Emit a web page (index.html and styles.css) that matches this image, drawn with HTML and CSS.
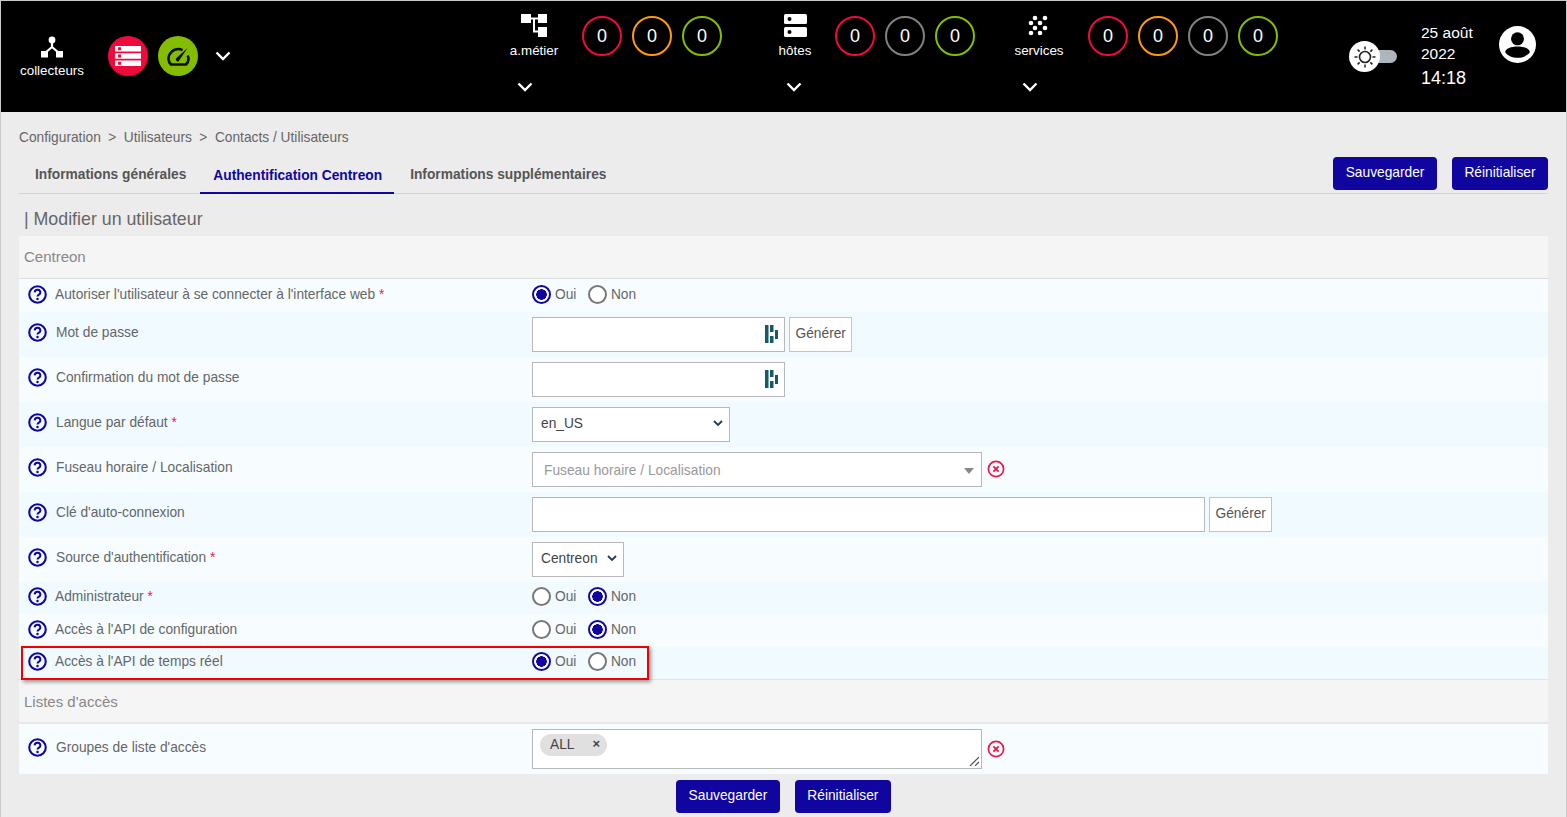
FILE: index.html
```html
<!DOCTYPE html>
<html lang="fr">
<head>
    <meta charset="UTF-8">
    <title>Modifier un utilisateur</title>
    <link rel="stylesheet" href="styles.css">
</head>
<body>
    <svg class="defs" width="0" height="0">
        <symbol id="help" viewBox="0 0 20 20">
            <circle cx="10" cy="10" r="8.7" fill="none" stroke="#10069f" stroke-width="2.2"/>
            <path d="M7 7.7a3 3 0 0 1 6 .4c0 1.9-3 2.1-3 4" fill="none" stroke="#10069f" stroke-width="2.1"/>
            <circle cx="10" cy="14.8" r="1.3" fill="#10069f"/>
        </symbol>
        <symbol id="pass" viewBox="0 0 13 18">
            <path d="M0 0h3.5v18H0zM5 0h3.5v7H5zM5 11h3.5v7H5zM10 5h3v9h-3z" fill="#16596b"/>
        </symbol>
        <symbol id="clear" viewBox="0 0 18 18">
            <circle cx="9" cy="9" r="7.6" fill="none" stroke="#e8174a" stroke-width="1.7"/>
            <path d="M6.4 6.4l5.2 5.2M11.6 6.4l-5.2 5.2" stroke="#e8174a" stroke-width="1.9"/>
        </symbol>
        <symbol id="chev" viewBox="0 0 16 10">
            <path d="M1.5 1.5L8 8l6.5-6.5" fill="none" stroke="#fff" stroke-width="2.4"/>
        </symbol>
    </svg>

    <header class="topbar">
        <div class="poller">
            <svg class="poller-icon" viewBox="0 0 24 22" width="24" height="22">
                <circle cx="12" cy="4" r="3.4" fill="#fff"/>
                <path d="M12 5v7M12 11l-7 6M12 11l7 6" stroke="#fff" stroke-width="2.2" fill="none"/>
                <rect x="1" y="15" width="7" height="6.5" fill="#fff"/>
                <rect x="16" y="15" width="7" height="6.5" fill="#fff"/>
            </svg>
            <span>collecteurs</span>
        </div>
        <div class="round round-red">
            <svg viewBox="0 0 26 20" width="26" height="20">
                <path d="M0 0h26v5.500H0zM0 7.300h26v5.500H0zM0 14.500h26V20H0z" fill="#fff"/>
                <path d="M3 1.300h3v3H3zM3 8.600h3v3H3zM3 15.800h3v3H3z" fill="#f00a3c"/>
            </svg>
        </div>
        <div class="round round-green">
            <svg viewBox="0 0 23 19" width="23" height="19">
                <path d="M15.500 3.200C14.200 2.500 12.900 2 11.500 2 6 2 1.500 6.500 1.500 12c0 2.200.8 4 2.500 5.500h15c1.700-1.500 2.500-3.300 2.500-5.500 0-1.300-.3-2.500-.8-3.500" fill="none" stroke="#0d0d0d" stroke-width="2.600"/>
                <path d="M20.500 1L9 11.500c-.8 1 .5 3.500 2.500 3z" fill="#0d0d0d"/>
            </svg>
        </div>
        <svg class="chev poller-chev"><use href="#chev"/></svg>

        <div class="stat stat-ba">
            <div class="stat-name">
                <svg class="stat-icon" viewBox="0 0 26 23" width="26" height="23">
                    <path d="M0 0h10v9H0zM17 0h9v9h-9zM17 13h9v10h-9z" fill="#fff"/>
                    <path d="M9 4.500h9M13 4.500V17.500h5" stroke="#fff" stroke-width="2" fill="none"/>
                </svg>
                <span>a.métier</span>
                <svg class="chev"><use href="#chev"/></svg>
            </div>
            <div class="stat-count red">0</div>
            <div class="stat-count orange">0</div>
            <div class="stat-count green">0</div>
        </div>

        <div class="stat stat-hosts">
            <div class="stat-name">
                <svg class="stat-icon" viewBox="0 0 23 23" width="23" height="23">
                    <rect width="23" height="10" rx="1.500" fill="#fff"/>
                    <rect y="13" width="23" height="10" rx="1.500" fill="#fff"/>
                    <circle cx="5.500" cy="5" r="2" fill="#000"/>
                    <circle cx="5.500" cy="18" r="2" fill="#000"/>
                </svg>
                <span>hôtes</span>
                <svg class="chev"><use href="#chev"/></svg>
            </div>
            <div class="stat-count red">0</div>
            <div class="stat-count grey">0</div>
            <div class="stat-count green">0</div>
        </div>

        <div class="stat stat-services">
            <div class="stat-name">
                <svg class="stat-icon" viewBox="0 0 22 21" width="22" height="21">
                    <circle cx="7" cy="3" r="2.300" fill="#fff"/>
                    <circle cx="17" cy="3" r="2.300" fill="#fff"/>
                    <circle cx="3" cy="8" r="2.300" fill="#fff"/>
                    <circle cx="12" cy="8" r="2.300" fill="#fff"/>
                    <circle cx="7" cy="13" r="2.300" fill="#fff"/>
                    <circle cx="17" cy="13" r="2.300" fill="#fff"/>
                    <circle cx="3" cy="18" r="2.300" fill="#fff"/>
                    <circle cx="12" cy="18" r="2.300" fill="#fff"/>
                </svg>
                <span>services</span>
                <svg class="chev"><use href="#chev"/></svg>
            </div>
            <div class="stat-count red">0</div>
            <div class="stat-count orange">0</div>
            <div class="stat-count grey">0</div>
            <div class="stat-count green">0</div>
        </div>

        <div class="theme-switch">
            <div class="theme-knob">
                <svg viewBox="0 0 24 24" width="24" height="24">
                    <circle cx="12" cy="12" r="5.500" fill="none" stroke="#222" stroke-width="1.600"/>
                    <path d="M12 1.500v3M12 19.500v3M1.500 12h3M19.500 12h3M4.600 4.600l2 2M17.400 17.400l2 2M4.600 19.400l2-2M17.400 6.600l2-2" stroke="#222" stroke-width="1.500"/>
                </svg>
            </div>
        </div>

        <div class="clock">
            <div class="clock-date">25 août 2022</div>
            <div class="clock-time">14:18</div>
        </div>

        <svg class="user" viewBox="0 0 36 36" width="37" height="37">
            <circle cx="18" cy="18" r="18" fill="#fff"/>
            <circle cx="18" cy="12.500" r="6.300" fill="#000"/>
            <path d="M6 25.500c0-3.500 6-5.500 12-5.500s12 2 12 5.500C27.500 29 23 31 18 31S8.500 29 6 25.500z" fill="#000"/>
        </svg>
    </header>

    <main class="content">
        <nav class="crumbs">
            <span>Configuration</span><span class="sep">&gt;</span><span>Utilisateurs</span><span class="sep">&gt;</span><span>Contacts / Utilisateurs</span>
        </nav>

        <div class="tabbar">
            <a class="tab tab-first">Informations générales</a>
            <a class="tab tab-active">Authentification Centreon</a>
            <a class="tab tab-last">Informations supplémentaires</a>
            <div class="tab-actions">
                <button class="btn">Sauvegarder</button>
                <button class="btn">Réinitialiser</button>
            </div>
        </div>

        <h1 class="page-title">| Modifier un utilisateur</h1>

        <form class="form">
            <div class="section">Centreon</div>

            <div class="row row-short odd">
                <div class="lbl lbl-radio"><svg class="help"><use href="#help"/></svg><span>Autoriser l'utilisateur à se connecter à l'interface web <i>*</i></span></div>
                <div class="val radios">
                    <label><input type="radio" name="login" checked>Oui</label>
                    <label><input type="radio" name="login">Non</label>
                </div>
            </div>

            <div class="row even">
                <div class="lbl"><svg class="help"><use href="#help"/></svg><span>Mot de passe</span></div>
                <div class="val">
                    <div class="field field-pass"><svg class="pass-icon"><use href="#pass"/></svg></div>
                    <button type="button" class="gen">Générer</button>
                </div>
            </div>

            <div class="row odd">
                <div class="lbl"><svg class="help"><use href="#help"/></svg><span>Confirmation du mot de passe</span></div>
                <div class="val">
                    <div class="field field-pass"><svg class="pass-icon"><use href="#pass"/></svg></div>
                </div>
            </div>

            <div class="row even">
                <div class="lbl"><svg class="help"><use href="#help"/></svg><span>Langue par défaut <i>*</i></span></div>
                <div class="val">
                    <div class="field field-lang">en_US<svg class="sel-chev" viewBox="0 0 10 7"><path d="M1 1l4 4 4-4" fill="none" stroke="#1f3a5f" stroke-width="1.800"/></svg></div>
                </div>
            </div>

            <div class="row odd">
                <div class="lbl"><svg class="help"><use href="#help"/></svg><span>Fuseau horaire / Localisation</span></div>
                <div class="val">
                    <div class="field field-wide field-tz">Fuseau horaire / Localisation<b class="caret"></b></div>
                    <svg class="clear"><use href="#clear"/></svg>
                </div>
            </div>

            <div class="row even">
                <div class="lbl"><svg class="help"><use href="#help"/></svg><span>Clé d'auto-connexion</span></div>
                <div class="val">
                    <div class="field field-key"></div>
                    <button type="button" class="gen">Générer</button>
                </div>
            </div>

            <div class="row odd">
                <div class="lbl"><svg class="help"><use href="#help"/></svg><span>Source d'authentification <i>*</i></span></div>
                <div class="val">
                    <div class="field field-source">Centreon<svg class="sel-chev" viewBox="0 0 10 7"><path d="M1 1l4 4 4-4" fill="none" stroke="#1f3a5f" stroke-width="1.800"/></svg></div>
                </div>
            </div>

            <div class="row row-tight even">
                <div class="lbl lbl-radio"><svg class="help"><use href="#help"/></svg><span>Administrateur <i>*</i></span></div>
                <div class="val radios">
                    <label><input type="radio" name="admin">Oui</label>
                    <label><input type="radio" name="admin" checked>Non</label>
                </div>
            </div>

            <div class="row row-short odd">
                <div class="lbl lbl-radio"><svg class="help"><use href="#help"/></svg><span>Accès à l'API de configuration</span></div>
                <div class="val radios">
                    <label><input type="radio" name="api_conf">Oui</label>
                    <label><input type="radio" name="api_conf" checked>Non</label>
                </div>
            </div>

            <div class="row row-tight even">
                <div class="lbl lbl-radio"><svg class="help"><use href="#help"/></svg><span>Accès à l'API de temps réel</span></div>
                <div class="val radios">
                    <label><input type="radio" name="api_rt" checked>Oui</label>
                    <label><input type="radio" name="api_rt">Non</label>
                </div>
                <div class="marker"></div>
            </div>

            <div class="section section-acl">Listes d'accès</div>

            <div class="row row-acl odd">
                <div class="lbl"><svg class="help"><use href="#help"/></svg><span>Groupes de liste d'accès</span></div>
                <div class="val">
                    <div class="field field-wide field-acl">
                        <span class="chip">ALL<b>×</b></span>
                        <svg class="grip" viewBox="0 0 10 10"><path d="M1 9l8-8M5.500 9L9 5.500" stroke="#555" stroke-width="1.200"/></svg>
                    </div>
                    <svg class="clear"><use href="#clear"/></svg>
                </div>
            </div>
        </form>

        <div class="form-actions">
            <button class="btn">Sauvegarder</button>
            <button class="btn">Réinitialiser</button>
        </div>
    </main>
</body>
</html>
```

FILE: styles.css
```css
* {
    box-sizing: border-box;
}
html, body {
    height: 100%;
    margin: 0;
}
body {
    font-family: "Liberation Sans", Arial, sans-serif;
    font-size: 13.75px;
    color: #666;
    background: #ececec;
    border: 1px solid #c9c9c9;
    border-bottom: none;
    overflow: hidden;
}
.defs {
    position: absolute;
}

/* top bar */
.topbar {
    display: flex;
    align-items: flex-start;
    height: 111px;
    background: #000;
    color: #fff;
    font-size: 13.4px;
}
.poller {
    width: 66px;
    margin: 35px 0 0 18px;
    text-align: center;
}
.poller-icon {
    display: block;
    margin: 0 auto 5px;
}
.round {
    display: flex;
    align-items: center;
    justify-content: center;
    width: 40px;
    height: 40px;
    margin-top: 35px;
    border-radius: 50%;
}
.round-red {
    margin-left: 23px;
    background: #f00a3c;
}
.round-green {
    margin-left: 10px;
    background: #84bd00;
}
.chev {
    display: block;
    width: 16px;
    height: 10px;
}
.poller-chev {
    margin: 50px 0 0 17px;
}
.stat {
    display: flex;
    align-items: flex-start;
    padding-top: 15px;
}
.stat-ba {
    margin-left: 273px;
}
.stat-hosts {
    margin-left: 43px;
}
.stat-services {
    margin-left: 34px;
}
.stat-name {
    width: 60px;
    margin-top: -2px;
    text-align: center;
}
.stat-icon {
    display: block;
    height: 23px;
    margin: 0 auto 6px;
}
.stat-name .chev {
    margin: 24px 0 0 13px;
}
.stat-hosts .stat-name .chev {
    margin-left: 21px;
}
.stat-count {
    width: 40px;
    height: 40px;
    margin-left: 10px;
    border: 2px solid;
    border-radius: 50%;
    color: #fff;
    font-size: 18px;
    line-height: 36px;
    text-align: center;
}
.stat-ba .stat-name + .stat-count {
    margin-left: 18px;
}
.stat-services .stat-name + .stat-count {
    margin-left: 19px;
}
.red { border-color: #f00a3c; }
.orange { border-color: #ff9913; }
.grey { border-color: #818185; }
.green { border-color: #84bd00; }
.theme-switch {
    position: relative;
    width: 32px;
    height: 13px;
    margin: 49px 0 0 87px;
    border-radius: 7px;
    background: #adb5bd;
}
.theme-knob {
    position: absolute;
    left: -16px;
    top: -9px;
    display: flex;
    align-items: center;
    justify-content: center;
    width: 31px;
    height: 31px;
    border-radius: 50%;
    background: #fff;
}
.clock {
    width: 62px;
    margin: 21px 0 0 24px;
}
.clock-date {
    font-size: 15.5px;
    line-height: 21px;
}
.clock-time {
    margin-top: 1px;
    font-size: 18px;
    line-height: 26px;
}
.user {
    margin: 25px 0 0 16px;
}

/* page head */
.content {
    padding: 0 18px;
}
.crumbs {
    padding-top: 18px;
    line-height: 16px;
}
.crumbs .sep {
    margin: 0 7.5px;
}
.tabbar {
    display: flex;
    align-items: flex-start;
    height: 37px;
    margin-top: 11px;
    border-bottom: 1px solid #d5d5d5;
}
.tab {
    height: 37px;
    font-weight: bold;
    line-height: 16px;
    color: #555;
}
.tab-first {
    padding: 10px 14px 0 16px;
}
.tab-active {
    padding: 11px 12px 0 13px;
    color: #10069f;
    border-bottom: 2px solid #10069f;
}
.tab-last {
    padding: 10px 0 0 16px;
}
.tab-actions {
    display: flex;
    gap: 15px;
    margin-left: auto;
}
.btn {
    height: 33px;
    padding: 0 12.5px 2px;
    border: none;
    border-radius: 4px;
    background: #10069f;
    color: #fff;
    font: 13.75px "Liberation Sans", Arial, sans-serif;
}
.page-title {
    height: 42px;
    margin: 0;
    padding: 8px 0 0 5px;
    font-size: 17.8px;
    font-weight: normal;
    line-height: 34px;
}

/* form */
.section {
    height: 43px;
    padding-left: 5px;
    border-bottom: 1px solid #ddd;
    background: #f5f5f5;
    color: #888;
    font-size: 15px;
    line-height: 42px;
}
.section-acl {
    height: 45px;
    border-top: 1px solid #e4e4e4;
    border-bottom: 2px solid #e8e8e8;
    line-height: 44px;
}
.row {
    position: relative;
    display: grid;
    grid-template-columns: 513px 1fr;
    align-items: center;
    height: 45px;
}
.row-short {
    height: 33px;
}
.row-tight {
    height: 32px;
}
.row-acl {
    height: 50px;
}
.odd { background: #f7fdff; }
.even { background: #f0faff; }
.lbl {
    display: flex;
    align-items: center;
    gap: 9px;
    margin: 0 0 5px 9px;
}
.lbl-radio {
    gap: 8px;
    margin-bottom: 3px;
}
.row-acl .lbl {
    margin-bottom: 4px;
}
.lbl i {
    color: #ed1c36;
    font-style: normal;
}
.help {
    flex: none;
    width: 19px;
    height: 19px;
}
.val {
    display: flex;
    align-items: center;
}
.radios {
    gap: 11.5px;
    margin-bottom: 3px;
}
.radios label {
    display: flex;
    align-items: center;
    gap: 4px;
}
.radios input {
    appearance: none;
    width: 19px;
    height: 19px;
    margin: 0;
    border: 2px solid #777;
    border-radius: 50%;
    background: #fff;
}
.radios input:checked {
    border-color: #10069f;
    background: radial-gradient(circle, #10069f 0 5px, #fff 5.5px);
}
.field {
    position: relative;
    height: 35px;
    border: 1px solid #b8b8b8;
    background: #fff;
    color: #444;
    line-height: 31px;
}
.field-pass {
    width: 253px;
}
.pass-icon {
    position: absolute;
    right: 6px;
    top: 7px;
    width: 13px;
    height: 18px;
}
.field-lang {
    width: 198px;
    padding-left: 8px;
}
.field-source {
    width: 92px;
    padding-left: 8px;
}
.sel-chev {
    position: absolute;
    right: 6px;
    top: 12px;
    width: 10px;
    height: 7px;
}
.field-wide {
    width: 450px;
}
.field-tz {
    padding-left: 11px;
    color: #999;
    line-height: 35px;
}
.field-tz + .clear {
    margin-bottom: 2px;
}
.caret {
    position: absolute;
    right: 7px;
    top: 15px;
    border-left: 5px solid transparent;
    border-right: 5px solid transparent;
    border-top: 6px solid #888;
}
.field-key {
    width: 673px;
}
.field-acl {
    height: 40px;
    padding: 4px 0 0 7px;
}
.chip {
    display: flex;
    justify-content: space-between;
    width: 67px;
    height: 22px;
    padding: 0 7px 0 10px;
    border-radius: 11px;
    background: #e0e0e0;
    line-height: 22px;
}
.chip b {
    font-size: 13px;
    line-height: 20px;
}
.grip {
    position: absolute;
    right: 1px;
    bottom: 1px;
    width: 11px;
    height: 11px;
}
.gen {
    height: 35px;
    margin-left: 4px;
    padding: 0 5.5px 3px;
    border: 1px solid #c4c4c4;
    background: #fff;
    color: #555;
    font: 13.75px "Liberation Sans", Arial, sans-serif;
}
.clear {
    width: 18px;
    height: 18px;
    margin-left: 5px;
}
.marker {
    position: absolute;
    left: 2px;
    top: -1px;
    width: 628px;
    height: 34px;
    border: 2px solid #f00000;
    box-shadow: 2px 2px 4px rgba(0, 0, 0, 0.4);
}
.form-actions {
    display: flex;
    justify-content: center;
    gap: 15px;
    margin-top: 6px;
}
```
